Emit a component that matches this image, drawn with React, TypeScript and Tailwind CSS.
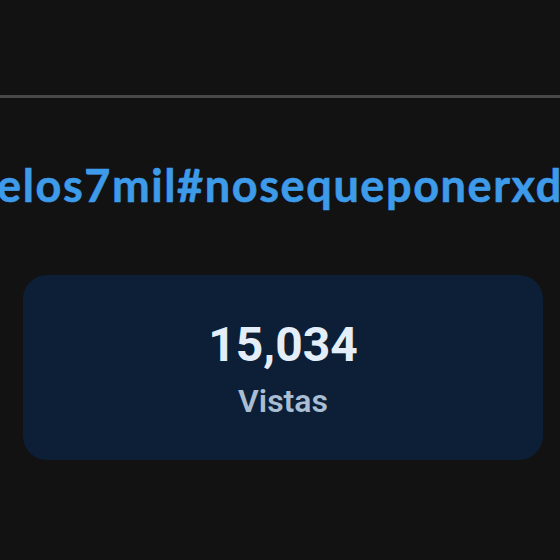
export default function App() {
  return (
    <main className="flex h-[560px] w-[560px] flex-col overflow-hidden bg-[#121212]">
      {/* top bar area */}
      <div className="h-[95px]" />
      <div className="h-[3px] w-full bg-[#474747]" />

      {/* hashtags, cut off on both sides */}
      <div className="mt-[60px] flex h-[54px] justify-center overflow-hidden whitespace-nowrap">
        <p className="font-['Lato',sans-serif] text-[45px] font-bold leading-[54px] tracking-[1.6px] text-[#3d9be9] [-webkit-text-stroke:0.6px_#3d9be9]">
          elos7mil#nosequeponerxd
        </p>
      </div>

      {/* views card */}
      <div className="ml-[23px] mt-[63px] flex h-[185px] w-[520px] flex-col items-center rounded-[24px] bg-[#0c1f36] pt-[42px] font-['Roboto',sans-serif]">
        <span className="text-[48px] font-bold leading-[56px] text-[#e4eef9]">15,034</span>
        <span className="mt-[9px] text-[32px] font-semibold leading-[38px] text-[#a9bdd3]">Vistas</span>
      </div>
    </main>
  );
}
